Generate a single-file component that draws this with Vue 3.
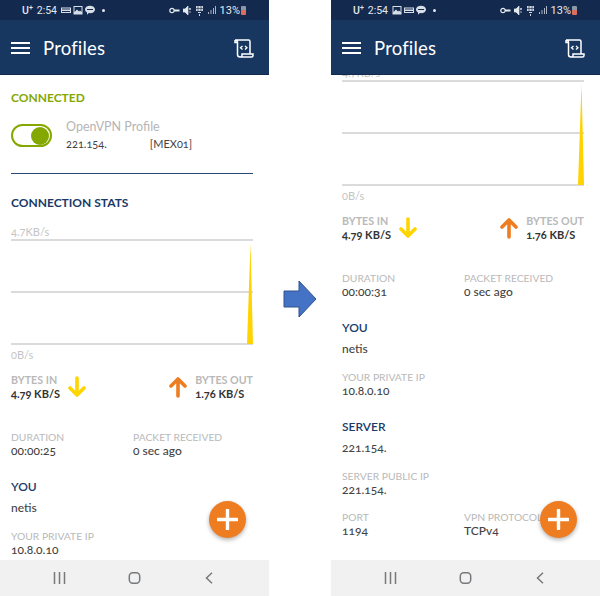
<template>
  <div class="screen">
    <template v-for="(phone, i) in phones" :key="phone.id">
      <div v-if="i === 1" class="between">
        <svg width="34" height="38" viewBox="0 0 34 38">
          <path d="M1 11h15V1l17 18-17 18V27H1z" fill="#4472c4" stroke="#2f528f" stroke-width="1" />
        </svg>
      </div>

      <section class="phone">
        <div class="status-bar">
          <span class="carrier">U<sup>+</sup></span>
          <span class="clock">2:54</span>
          <svg v-for="icon in phone.statusIcons" :key="icon" class="status-icon" width="10" height="10" viewBox="0 0 10 10">
            <path :d="statusPaths[icon]" fill="#d8dee8" fill-rule="evenodd" />
          </svg>
          <span class="dot"></span>
          <span class="status-right">
            <svg width="11" height="7" viewBox="0 0 11 7">
              <circle cx="3" cy="3.5" r="2.2" fill="none" stroke="#e4e8ef" stroke-width="1.2" />
              <path d="M5 2.500h5.500v2H5z" fill="#e4e8ef" />
            </svg>
            <svg width="9" height="9" viewBox="0 0 9 9">
              <path d="M0 3h2l3-3v9L2 6H0zM6 2l2 2M8 2 6 4M6 6h2" stroke="#e4e8ef" fill="#e4e8ef" stroke-width=".7" />
            </svg>
            <svg width="9" height="11" viewBox="0 0 9 11">
              <path d="M1 1h7v5H1zM3 7h3v1H3zM4 9h1v2H4z" fill="#cfd6e0" />
              <path d="M3 1v5M6 1v5M1 3.500h7" stroke="#132a4e" stroke-width=".6" />
            </svg>
            <svg width="9" height="8" viewBox="0 0 9 8">
              <path d="M1 6h1v2H1zM3.500 4h1v4h-1zM6 2h1v6H6zM8 0h1v8H8z" fill="#aab4c4" />
            </svg>
            <span class="percent">13%</span>
            <span class="battery"></span>
          </span>
        </div>

        <header class="app-bar">
          <svg width="19" height="12" viewBox="0 0 19 12">
            <path d="M0 1h19M0 6h19M0 11h19" stroke="#fff" stroke-width="2" />
          </svg>
          <h1 class="title">Profiles</h1>
          <svg class="log-icon" width="20" height="19" viewBox="0 0 20 19" fill="none" stroke="#fff">
            <path d="M1 1h13.500c1 0 1.500.7 1.500 1.500V15M1 1c1.500 0 2.500 1 2.500 2.500v12c0 1.500 1 2.500 2.500 2.500h11.500c1 0 1.500-.7 1.500-1.500V15H8v1.500c0 1-.7 1.500-1.500 1.500M1 1v2.500h2.500" stroke-width="1.500" />
            <path d="m8.500 7-2 1.800 2 1.800M11 7l2 1.800-2 1.800" stroke-width="1.300" />
          </svg>
        </header>

        <main class="body">
          <div class="content" :style="{ marginTop: -phone.scroll + 'px' }">
            <h2 class="connected">CONNECTED</h2>
            <div class="profile">
              <span class="toggle"><span class="knob"></span></span>
              <div>
                <div class="profile-name">OpenVPN Profile</div>
                <div class="profile-addr"><span>221.154.</span><span>[MEX01]</span></div>
              </div>
            </div>
            <div class="divider"></div>

            <h2 class="heading stats-heading">CONNECTION STATS</h2>
            <div class="axis axis-top">4.7KB/s</div>
            <svg class="chart" width="242" height="106" viewBox="0 0 242 106">
              <path d="M0 1h242M0 53h242M0 105h242" stroke="#cfcfcf" stroke-width="1.500" />
              <path d="M236 105 239.500 4 242 105z" fill="#ffd200" />
            </svg>
            <div class="axis axis-bottom">0B/s</div>

            <div class="bytes">
              <div class="bytes-side">
                <div>
                  <div class="label">BYTES IN</div>
                  <div class="rate">4.79 KB/S</div>
                </div>
                <svg width="18" height="22" viewBox="0 0 18 22">
                  <path d="M9 2v17M2 12l7 7 7-7" fill="none" stroke="#ffd500" stroke-width="3.600" stroke-linecap="round" stroke-linejoin="round" />
                </svg>
              </div>
              <div class="bytes-side">
                <svg width="18" height="22" viewBox="0 0 18 22">
                  <path d="M9 20V3M2 10l7-7 7 7" fill="none" stroke="#ee7d22" stroke-width="3.600" stroke-linecap="round" stroke-linejoin="round" />
                </svg>
                <div>
                  <div class="label">BYTES OUT</div>
                  <div class="rate">1.76 KB/S</div>
                </div>
              </div>
            </div>

            <div class="pair duration">
              <div>
                <div class="label">DURATION</div>
                <div class="value">{{ phone.duration }}</div>
              </div>
              <div>
                <div class="label">PACKET RECEIVED</div>
                <div class="value">0 sec ago</div>
              </div>
            </div>

            <h2 class="heading block-heading">YOU</h2>
            <div class="value first-value">netis</div>
            <div class="label next-label">YOUR PRIVATE IP</div>
            <div class="value">10.8.0.10</div>

            <h2 class="heading block-heading">SERVER</h2>
            <div class="value first-value">221.154.</div>
            <div class="label next-label">SERVER PUBLIC IP</div>
            <div class="value">221.154.</div>
            <div class="pair port">
              <div>
                <div class="label">PORT</div>
                <div class="value">1194</div>
              </div>
              <div>
                <div class="label">VPN PROTOCOL</div>
                <div class="value">TCPv4</div>
              </div>
            </div>
          </div>
          <button class="fab">
            <svg width="21" height="21" viewBox="0 0 21 21">
              <path d="M10.500 1v19M1 10.500h19" stroke="#fff" stroke-width="3.400" stroke-linecap="round" />
            </svg>
          </button>
        </main>

        <nav class="nav-bar">
          <svg width="15" height="12" viewBox="0 0 15 12">
            <path d="M2.500 0v12M7.500 0v12M12.500 0v12" stroke="#77797c" stroke-width="1.500" />
          </svg>
          <svg width="15" height="12" viewBox="0 0 15 12">
            <rect x="2.300" y=".8" width="10.400" height="10.400" rx="3.400" fill="none" stroke="#77797c" stroke-width="1.500" />
          </svg>
          <svg width="15" height="12" viewBox="0 0 15 12">
            <path d="M10 .8 4.500 6l5.500 5.200" fill="none" stroke="#77797c" stroke-width="1.500" />
          </svg>
        </nav>
      </section>
    </template>
  </div>
</template>

<script setup>
const statusPaths = {
  card: 'M0 2.500h10v5.500H0zM1 3.500v1h8v-1zM1 6v1h8V6z',
  image: 'M.5 1h9v8.500h-9zM1.500 2v5l2.500-2.500 2 2 1-1 1.500 1.500V2z',
  bubble: 'M5 .8c2.800 0 5 1.600 5 3.700S7.800 8.200 5 8.200c-.4 0-.8 0-1.200-.1L2 9.800V7.400C.8 6.700 0 5.700 0 4.500 0 2.400 2.200.8 5 .8zM2 4v1h6V4z',
}

const phones = [
  { id: 'before', scroll: 0, duration: '00:00:25', statusIcons: ['card', 'image', 'bubble'] },
  { id: 'after', scroll: 159, duration: '00:00:31', statusIcons: ['image', 'card', 'bubble'] },
]
</script>

<style scoped>
.screen {
  display: flex; width: 600px; height: 596px; background: #fff; overflow: hidden;
  font-family: Lato, "Open Sans", sans-serif;
  font-variant-numeric: oldstyle-nums;
}
.between { width: 62px; display: flex; align-items: center; justify-content: center; padding-top: 2px; box-sizing: border-box; }
.phone { width: 269px; height: 596px; display: flex; flex-direction: column; flex-shrink: 0; }

.status-bar {
  height: 20px; background: #132a4e; color: #e4e8ef; display: flex; align-items: center;
  padding: 0 23px 0 22px; font-family: Roboto, sans-serif; font-size: 10.5px;
  font-variant-numeric: lining-nums;
}
.carrier { font-weight: 500; }
.carrier sup { font-size: 7px; line-height: 0; }
.clock { margin: 0 4px 0 4px; }
.status-icon { margin-right: 2px; }
.dot { width: 3px; height: 3px; border-radius: 50%; background: #e4e8ef; margin-left: 5px; }
.status-right { margin-left: auto; display: flex; align-items: center; gap: 3px; }
.percent { font-size: 11px; margin-left: 1px; }
.battery { width: 5px; height: 9px; background: linear-gradient(#8c98a8 40%, #d9705f 40%); border-radius: 1px; margin-left: -2px; }

.app-bar {
  height: 55px; background: #173761; border-bottom: 1px solid #10294c; box-sizing: border-box;
  display: flex; align-items: center; padding: 2px 15px 0 11px; color: #fff;
}
.title { font-size: 18.5px; font-weight: 400; margin: 0 0 0 13px; letter-spacing: .2px; }
.log-icon { margin-left: auto; }

.body { flex: 1; min-height: 0; overflow: hidden; position: relative; }
.content { padding: 16px 16px 0 11px; }

h2 { margin: 0; font-size: 12px; line-height: 14px; font-weight: 700; }
.connected { color: #84a800; }
.heading { color: #1a3a68; font-weight: 700; }
.stats-heading { margin-top: 22px; }
.block-heading { margin-top: 22px; font-weight: 600; font-size: 12px; }

.profile { display: flex; align-items: flex-start; margin-top: 15px; }
.toggle {
  width: 41px; height: 23px; box-sizing: border-box; border: 2px solid #84a800; border-radius: 12px;
  margin: 4px 14px 0 0; display: flex; align-items: center; justify-content: flex-end; padding-right: 1px;
}
.knob { width: 18px; height: 18px; border-radius: 50%; background: #84a800; }
.profile-name { color: #b5b5b5; font-size: 12.500px; line-height: 14px; }
.profile-addr { display: flex; gap: 43px; margin-top: 3px; color: #444; font-size: 11px; line-height: 14px; }

.divider { height: 1px; background: #2a4a75; margin-top: 22px; }

.axis { color: #c4c4c4; font-size: 11px; line-height: 14px; }
.axis-top { margin-top: 15px; }
.axis-bottom { margin-top: 3px; }
.chart { display: block; }

.label { color: #b9b9b9; font-size: 10.300px; line-height: 14px; }
.value { color: #444; font-size: 12px; line-height: 14px; font-weight: 500; }
.rate { color: #333; font-size: 11px; line-height: 13px; font-weight: 700; }

.bytes { display: flex; justify-content: space-between; margin-top: 11px; }
.bytes-side { display: flex; align-items: center; gap: 8px; }
.bytes-side .label { font-size: 10.700px; font-weight: 700; }

.pair { display: grid; grid-template-columns: 122px 1fr; }
.duration { margin-top: 30px; }
.port { margin-top: 13px; }
.first-value { margin-top: 7px; }
.next-label { margin-top: 14px; }

.fab {
  position: absolute; right: 23px; bottom: 22px; width: 37px; height: 37px; padding: 0; border: 0;
  border-radius: 50%; background: #ee7d22; box-shadow: 0 2px 4px rgba(0, 0, 0, .3);
  display: flex; align-items: center; justify-content: center;
}

.nav-bar {
  height: 36px; background: #f1f1f1; display: flex; align-items: center; justify-content: center; gap: 60px;
}
</style>
